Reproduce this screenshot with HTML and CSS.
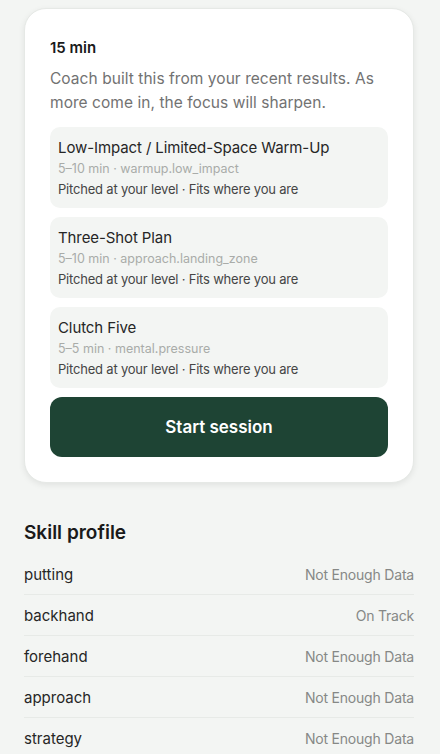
FILE: index.html
```html
<!DOCTYPE html>
<html>
<head>
<meta charset="utf-8">
<link rel="stylesheet" href="styles.css">
</head>
<body>
<div class="page">
  <section class="card">
    <div class="dur">15 min</div>
    <p class="desc">Coach built this from your recent results. As more come in, the focus will sharpen.</p>
    <div class="items">
      <div class="item">
        <div class="title">Low-Impact / Limited-Space Warm-Up</div>
        <div class="meta">5–10 min · warmup.low_impact</div>
        <div class="sub">Pitched at your level · Fits where you are</div>
      </div>
      <div class="item">
        <div class="title">Three-Shot Plan</div>
        <div class="meta">5–10 min · approach.landing_zone</div>
        <div class="sub">Pitched at your level · Fits where you are</div>
      </div>
      <div class="item">
        <div class="title">Clutch Five</div>
        <div class="meta">5–5 min · mental.pressure</div>
        <div class="sub">Pitched at your level · Fits where you are</div>
      </div>
    </div>
    <button class="start">Start session</button>
  </section>
  <section class="skills">
    <h2>Skill profile</h2>
    <div class="row"><span class="name">putting</span><span class="val">Not Enough Data</span></div>
    <div class="row"><span class="name">backhand</span><span class="val">On Track</span></div>
    <div class="row"><span class="name">forehand</span><span class="val">Not Enough Data</span></div>
    <div class="row"><span class="name">approach</span><span class="val">Not Enough Data</span></div>
    <div class="row"><span class="name">strategy</span><span class="val">Not Enough Data</span></div>
  </section>
</div>
</body>
</html>
```
FILE: styles.css
```css
* { box-sizing: border-box; }
html, body { margin: 0; padding: 0; }
body {
  background: #f3f5f3;
  font-family: Inter, "Noto Sans", sans-serif;
  color: #1e1e1e;
  width: 440px;
  height: 754px;
  overflow: hidden;
}
.page { padding: 8px 26px 0 24px; }
.card {
  background: #ffffff;
  border-radius: 22px;
  border: 1px solid #e6e9e6;
  box-shadow: 0 2px 6px rgba(0,0,0,0.08);
  padding: 28px 25px 25px 25px;
  display: flex;
  flex-direction: column;
}
.dur { font-size: 15px; font-weight: 600; line-height: 22px; color: #1a1a1a; }
.desc {
  margin: 8px 0 0 0;
  font-size: 15.5px;
  line-height: 24px;
  color: #727272;
  letter-spacing: 0.05px;
}
.items { display: flex; flex-direction: column; gap: 9px; margin-top: 12px; }
.item {
  background: #f3f5f3;
  border-radius: 10px;
  padding: 10px 8px 9px 8px;
  height: 81px;
}
.title { font-size: 15px; line-height: 22px; color: #262626; letter-spacing: -0.1px; }
.meta { font-size: 12.5px; line-height: 20px; color: #a9aca9; margin-top: 0; }
.sub { font-size: 13px; line-height: 20px; color: #454545; letter-spacing: -0.2px; }
.start {
  margin-top: 9px;
  height: 60px;
  border: none;
  border-radius: 12px;
  background: #1e4434;
  color: #ffffff;
  font-family: Inter, "Noto Sans", sans-serif;
  font-size: 17px;
  font-weight: 600;
}
.skills { margin-top: 38px; }
.skills h2 {
  margin: 0 0 9px 0;
  font-size: 19px;
  font-weight: 600;
  line-height: 24px;
  color: #1a1a1a;
}
.row {
  display: flex;
  justify-content: space-between;
  align-items: center;
  height: 41px;
  border-bottom: 1px solid #e7eae7;
}
.row:last-child { border-bottom: none; }
.name { font-size: 15px; color: #262626; }
.val { font-size: 14px; color: #868886; letter-spacing: -0.2px; }
```
